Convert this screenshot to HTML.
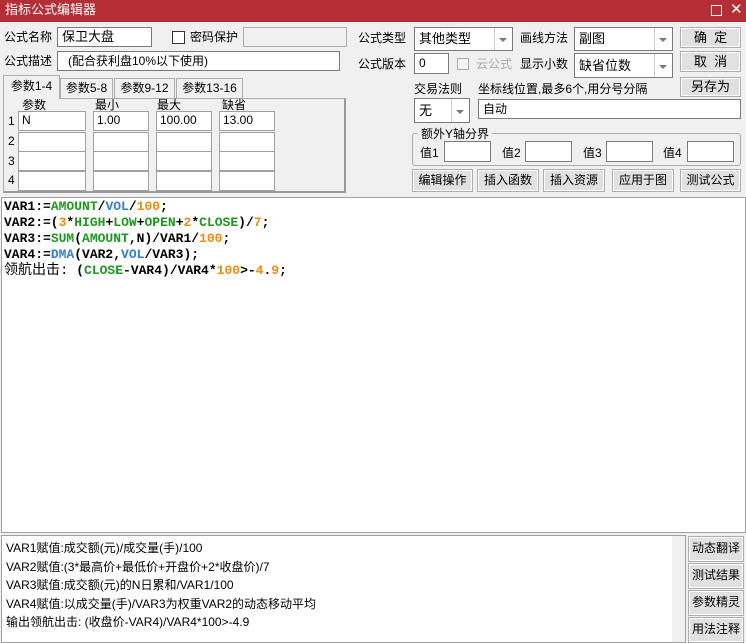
<!DOCTYPE html>
<html><head><meta charset="utf-8"><style>
*{box-sizing:border-box;margin:0;padding:0}
body{width:746px;height:643px;overflow:hidden;background:#f0f0f0;font-family:"Liberation Sans","Noto Sans CJK SC",sans-serif;font-size:12px;color:#000;position:relative;line-height:14px}
.a{position:absolute;white-space:nowrap;line-height:14px}
.in{position:absolute;background:#fff;border:1px solid #7a7a7a;padding:2px 4px;font-size:12px;line-height:14px}
.btn{position:absolute;background:#e1e1e1;border:1px solid #adadad;box-shadow:inset 0 0 0 1px #fff;text-align:center;font-size:12px}
.sel{position:absolute;background:#fff;border:1px solid #7a7a7a;padding:3px 4px;font-size:12px;line-height:15px}
.sel::after{content:"";position:absolute;right:0;top:0;bottom:0;width:17px;border-left:1px solid #ccc;background:#fff}
.arr{position:absolute;right:5px;top:50%;margin-top:-1px;width:0;height:0;border-left:4px solid transparent;border-right:4px solid transparent;border-top:4px solid #777;z-index:2}
.tab{position:absolute;border:1px solid #adadad;border-bottom:none;background:#f0f0f0;text-align:center;line-height:18px}
.cell{position:absolute;background:#fff;border:1px solid #a0a0a0;padding:1px 3px;line-height:15px}
.code{position:absolute;left:1px;top:197px;width:745px;height:336px;background:#fff;border:1px solid #a0a0a0;font-family:"Liberation Mono","Noto Sans CJK SC",monospace;font-weight:bold;font-size:13px;line-height:16px;padding:1px 2px;color:#000}
.g{color:#1a9a1a}.b{color:#2f7fd0}.o{color:#f08a10}
</style></head><body>
<div class="a" style="left:0;top:0;width:746px;height:22px;background:#b52e35"></div>
<div class="a" style="left:5px;top:3px;color:#fff;font-size:13px">指标公式编辑器</div>
<div class="a" style="left:711px;top:5px;width:11px;height:11px;border:1px solid #fff"></div>
<div class="a" style="left:730px;top:3px;color:#fff;font-size:15px">✕</div>

<div class="a" style="left:4px;top:30px">公式名称</div>
<div class="in" style="left:57px;top:27px;width:95px;height:20px;font-size:13px">保卫大盘</div>
<div class="a" style="left:172px;top:31px;width:13px;height:13px;border:1px solid #333;background:#fff"></div>
<div class="a" style="left:190px;top:30px">密码保护</div>
<div class="a" style="left:243px;top:27px;width:104px;height:20px;border:1px solid #adadad;background:#f0f0f0"></div>
<div class="a" style="left:4px;top:54px">公式描述</div>
<div class="in" style="left:57px;top:51px;width:283px;height:20px;padding-left:10px">(配合获利盘10%以下使用)</div>

<div class="a" style="left:3px;top:98px;width:343px;height:95px;border:1px solid #adadad;border-right:2px solid #999;border-bottom:2px solid #999"></div>
<div class="tab" style="left:60px;top:78px;width:53px;height:20px">参数5-8</div>
<div class="tab" style="left:114px;top:78px;width:61px;height:20px">参数9-12</div>
<div class="tab" style="left:176px;top:78px;width:67px;height:20px">参数13-16</div>
<div class="tab" style="left:3px;top:75px;width:57px;height:24px;line-height:20px;z-index:2">参数1-4</div>
<div class="a" style="left:22px;top:98px">参数</div>
<div class="a" style="left:95px;top:98px">最小</div>
<div class="a" style="left:157px;top:98px">最大</div>
<div class="a" style="left:222px;top:98px">缺省</div>
<div class="a" style="left:8px;top:114px">1</div><div class="a" style="left:8px;top:134px">2</div><div class="a" style="left:8px;top:154px">3</div><div class="a" style="left:8px;top:173px">4</div>
<div class="cell" style="left:18px;top:111px;width:68px;height:20px">N</div>
<div class="cell" style="left:93px;top:111px;width:56px;height:20px">1.00</div>
<div class="cell" style="left:156px;top:111px;width:56px;height:20px">100.00</div>
<div class="cell" style="left:219px;top:111px;width:56px;height:20px">13.00</div>
<div class="cell" style="left:18px;top:132px;width:68px;height:20px"></div><div class="cell" style="left:93px;top:132px;width:56px;height:20px"></div><div class="cell" style="left:156px;top:132px;width:56px;height:20px"></div><div class="cell" style="left:219px;top:132px;width:56px;height:20px"></div>
<div class="cell" style="left:18px;top:151px;width:68px;height:20px"></div><div class="cell" style="left:93px;top:151px;width:56px;height:20px"></div><div class="cell" style="left:156px;top:151px;width:56px;height:20px"></div><div class="cell" style="left:219px;top:151px;width:56px;height:20px"></div>
<div class="cell" style="left:18px;top:171px;width:68px;height:20px"></div><div class="cell" style="left:93px;top:171px;width:56px;height:20px"></div><div class="cell" style="left:156px;top:171px;width:56px;height:20px"></div><div class="cell" style="left:219px;top:171px;width:56px;height:20px"></div>

<div class="a" style="left:358px;top:31px">公式类型</div>
<div class="sel" style="left:414px;top:27px;width:99px;height:24px;font-size:13px">其他类型<span class="arr"></span></div>
<div class="a" style="left:520px;top:31px">画线方法</div>
<div class="sel" style="left:574px;top:27px;width:99px;height:24px;font-size:13px">副图<span class="arr"></span></div>
<div class="btn" style="left:680px;top:27px;width:61px;height:21px;line-height:19px;font-size:13px">确&nbsp;&nbsp;定</div>
<div class="a" style="left:358px;top:57px">公式版本</div>
<div class="in" style="left:414px;top:53px;width:35px;height:21px">0</div>
<div class="a" style="left:457px;top:58px;width:12px;height:12px;border:1px solid #aaa;background:#f4f4f4"></div>
<div class="a" style="left:476px;top:57px;color:#aaa">云公式</div>
<div class="a" style="left:520px;top:57px">显示小数</div>
<div class="sel" style="left:574px;top:53px;width:99px;height:25px;padding-top:4px;font-size:13px">缺省位数<span class="arr"></span></div>
<div class="btn" style="left:680px;top:51px;width:61px;height:21px;line-height:19px;font-size:13px">取&nbsp;&nbsp;消</div>
<div class="btn" style="left:680px;top:77px;width:61px;height:20px;line-height:18px;font-size:13px">另存为</div>
<div class="a" style="left:414px;top:82px">交易法则</div>
<div class="a" style="left:478px;top:82px">坐标线位置,最多6个,用分号分隔</div>
<div class="sel" style="left:414px;top:98px;width:56px;height:25px;padding-top:4px;font-size:13px">无<span class="arr"></span></div>
<div class="in" style="left:478px;top:99px;width:263px;height:20px">自动</div>
<div class="a" style="left:412px;top:133px;width:329px;height:33px;border:1px solid #aaa;border-radius:3px"></div>
<div class="a" style="left:418px;top:127px;background:#f0f0f0;padding:0 3px">额外Y轴分界</div>
<div class="a" style="left:420px;top:146px">值1</div><div class="in" style="left:444px;top:141px;width:47px;height:21px"></div>
<div class="a" style="left:502px;top:146px">值2</div><div class="in" style="left:525px;top:141px;width:47px;height:21px"></div>
<div class="a" style="left:583px;top:146px">值3</div><div class="in" style="left:606px;top:141px;width:47px;height:21px"></div>
<div class="a" style="left:663px;top:146px">值4</div><div class="in" style="left:687px;top:141px;width:47px;height:21px"></div>
<div class="btn" style="left:412px;top:169px;width:61px;height:23px;line-height:20px">编辑操作</div>
<div class="btn" style="left:477px;top:169px;width:62px;height:23px;line-height:20px">插入函数</div>
<div class="btn" style="left:543px;top:169px;width:62px;height:23px;line-height:20px">插入资源</div>
<div class="btn" style="left:612px;top:169px;width:62px;height:23px;line-height:20px">应用于图</div>
<div class="btn" style="left:680px;top:169px;width:61px;height:23px;line-height:20px">测试公式</div>

<div class="code">VAR1:=<span class="g">AMOUNT</span>/<span class="b">VOL</span>/<span class="o">100</span>;<br>VAR2:=(<span class="o">3</span>*<span class="g">HIGH</span>+<span class="g">LOW</span>+<span class="g">OPEN</span>+<span class="o">2</span>*<span class="g">CLOSE</span>)/<span class="o">7</span>;<br>VAR3:=<span class="g">SUM</span>(<span class="g">AMOUNT</span>,N)/VAR1/<span class="o">100</span>;<br>VAR4:=<span class="b">DMA</span>(VAR2,<span class="b">VOL</span>/VAR3);<br><span style="font-weight:normal;font-size:14px">领航出击:</span> (<span class="g">CLOSE</span>-VAR4)/VAR4*<span class="o">100</span>&gt;-<span class="o">4</span>.<span class="o">9</span>;</div>

<div class="a" style="left:1px;top:535px;width:685px;height:108px;background:#fff;border:1px solid #a0a0a0"></div>
<div class="a" style="left:672px;top:536px;width:13px;height:106px;background:#f0f0f0"></div>
<div class="a" style="left:6px;top:539px;line-height:18.5px;font-size:12px">VAR1赋值:成交额(元)/成交量(手)/100<br>VAR2赋值:(3*最高价+最低价+开盘价+2*收盘价)/7<br>VAR3赋值:成交额(元)的N日累和/VAR1/100<br>VAR4赋值:以成交量(手)/VAR3为权重VAR2的动态移动平均<br>输出领航出击: (收盘价-VAR4)/VAR4*100&gt;-4.9</div>
<div class="btn" style="left:688px;top:536px;width:56px;height:26px;line-height:23px">动态翻译</div>
<div class="btn" style="left:688px;top:563px;width:56px;height:26px;line-height:23px">测试结果</div>
<div class="btn" style="left:688px;top:590px;width:56px;height:26px;line-height:23px">参数精灵</div>
<div class="btn" style="left:688px;top:617px;width:56px;height:26px;line-height:23px">用法注释</div>
</body></html>
